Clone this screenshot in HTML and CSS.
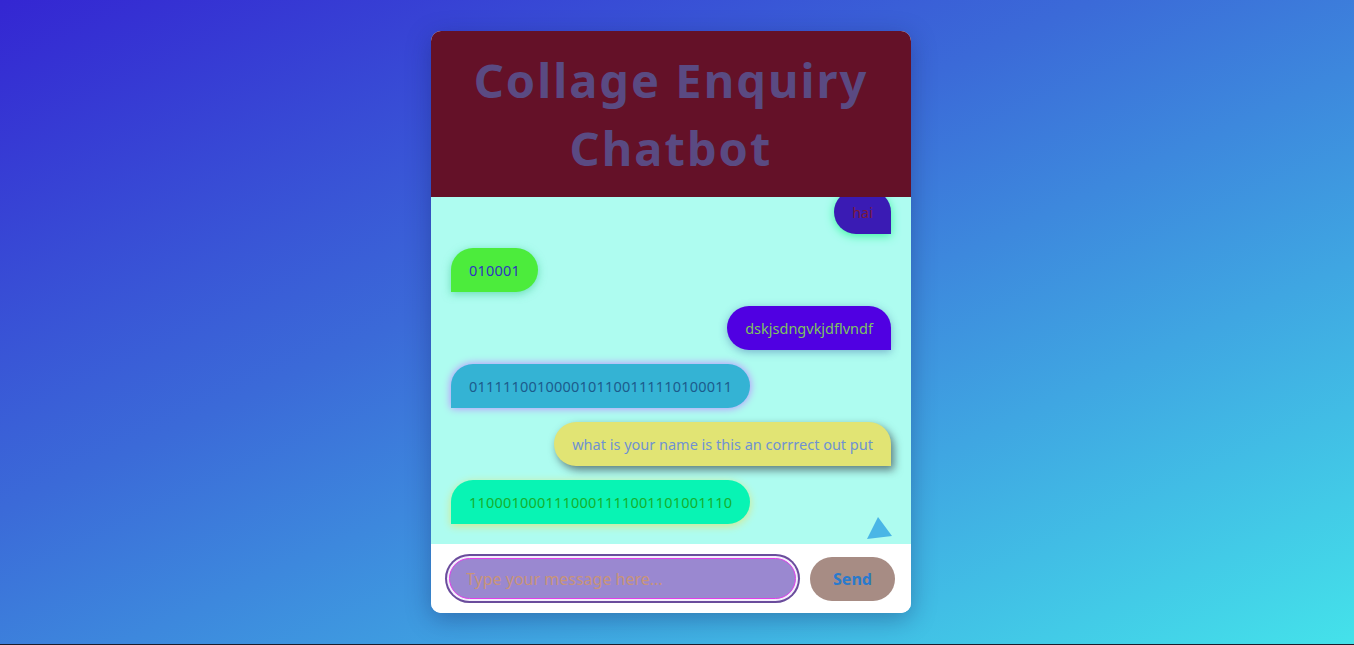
FILE: index.html
```html
<!DOCTYPE html>
<html lang="en">
<head>
<meta charset="utf-8">
<title>Collage Enquiry Chatbot</title>
<link rel="stylesheet" href="styles.css">
</head>
<body>
<div class="page">
  <div class="chat-box">
    <header class="chat-header">
      <h1 class="chat-title">Collage Enquiry Chatbot</h1>
    </header>
    <div class="chat-body">
      <div class="messages">
        <div class="msg user m1">hai</div>
        <div class="msg bot m2">010001</div>
        <div class="msg user m3">dskjsdngvkjdflvndf</div>
        <div class="msg bot m4">0111110010000101100111110100011</div>
        <div class="msg user m5">what is your name is this an corrrect out put</div>
        <div class="msg bot m6">1100010001110001111001101001110</div>
      </div>
      <button class="scroll-btn" aria-label="Scroll">
        <svg width="28" height="26" viewBox="0 0 28 26"><polygon points="12,2 1,24 26,21" fill="#4ab6e6"/></svg>
      </button>
    </div>
    <form class="chat-input">
      <input class="text-field" type="text" placeholder="Type your message here..." autofocus>
      <button class="send-btn" type="button">Send</button>
    </form>
  </div>
</div>
</body>
</html>
```
FILE: styles.css
```css
html {
  background: #1c1c2c;
  margin: 0;
  padding: 0;
}
body {
  margin: 0;
  height: 644px;
  background: linear-gradient(155deg, #3426d2 0%, #3b6ad8 40%, #3fa6e2 70%, #44e2ea 100%);
  font-family: "Noto Sans", "Open Sans", sans-serif;
  overflow: hidden;
}
.page {
  display: flex;
  justify-content: center;
  padding-top: 31px;
  padding-right: 12px;
}
.chat-box {
  width: 480px;
  height: 582px;
  border-radius: 10px;
  overflow: hidden;
  display: flex;
  flex-direction: column;
  background: #fff;
  box-shadow: 0 6px 24px rgba(20, 30, 90, 0.35);
}
.chat-header {
  background: #641128;
  height: 166px;
  flex: none;
  display: flex;
  align-items: center;
  justify-content: center;
}
.chat-title {
  margin: 0;
  color: #5a4a82;
  font-family: "Noto Sans", "Open Sans", sans-serif;
  font-weight: 700;
  font-size: 47px;
  line-height: 68px;
  letter-spacing: 2px;
  text-align: center;
  padding: 0 8px;
}
.chat-body {
  position: relative;
  flex: 1;
  background: #aefcf0;
  overflow: hidden;
  display: flex;
  flex-direction: column;
  justify-content: flex-end;
}
.messages {
  display: flex;
  flex-direction: column;
  gap: 14px;
  padding: 0 20px 20px;
}
.msg {
  font-size: 14.5px;
  line-height: 20px;
  padding: 12px 18px;
  border-radius: 22px;
  max-width: 80%;
}
.user {
  align-self: flex-end;
  border-bottom-right-radius: 0;
}
.bot {
  align-self: flex-start;
  border-bottom-left-radius: 0;
  letter-spacing: 0.2px;
}
.m1 { background: #3a1bb4; color: #7a1a3c; box-shadow: 0 2px 10px #3cf6a0; }
.m2 { background: #4cec3c; color: #2f33c0; box-shadow: 0 2px 8px rgba(60, 200, 140, 0.6); }
.m3 { background: #5000e2; color: #7ec45e; box-shadow: 0 2px 8px rgba(50, 90, 160, 0.45); }
.m4 { background: #34b3d4; color: #1c5b8c; box-shadow: 0 0 8px #c080ff; }
.m5 { background: #e1e474; color: #6f92d2; box-shadow: 3px 4px 8px rgba(40, 40, 50, 0.6); }
.m6 { background: #08f4b4; color: #14b02e; box-shadow: 0 2px 8px #d8e888; }
.scroll-btn {
  position: absolute;
  right: 17px;
  bottom: 3px;
  border: none;
  background: none;
  padding: 0;
  cursor: pointer;
}
.scroll-btn svg { display: block; }
.chat-input {
  flex: none;
  margin: 0;
  height: 69px;
  box-sizing: border-box;
  padding: 0 16px 0 18px;
  display: flex;
  align-items: center;
  gap: 14px;
  background: #fff;
}
.text-field {
  flex: 1;
  height: 41px;
  box-sizing: border-box;
  border: 1.5px solid #e040e8;
  border-radius: 22px;
  background: #9a88d0;
  padding: 0 16px;
  font-family: "Noto Sans", "Open Sans", sans-serif;
  font-size: 16px;
  color: #333;
  caret-color: #f08c1c;
  box-shadow: 0 0 0 2px #f4eefc, 0 0 0 4px #6a4c9c;
  outline: none;
}
.text-field::placeholder {
  color: #c89478;
}
.send-btn {
  flex: none;
  width: 85px;
  height: 44px;
  border: none;
  border-radius: 22px;
  background: #a78c84;
  color: #2a7acc;
  font-family: "Noto Sans", "Open Sans", sans-serif;
  font-weight: 700;
  font-size: 16px;
  cursor: pointer;
}
```
